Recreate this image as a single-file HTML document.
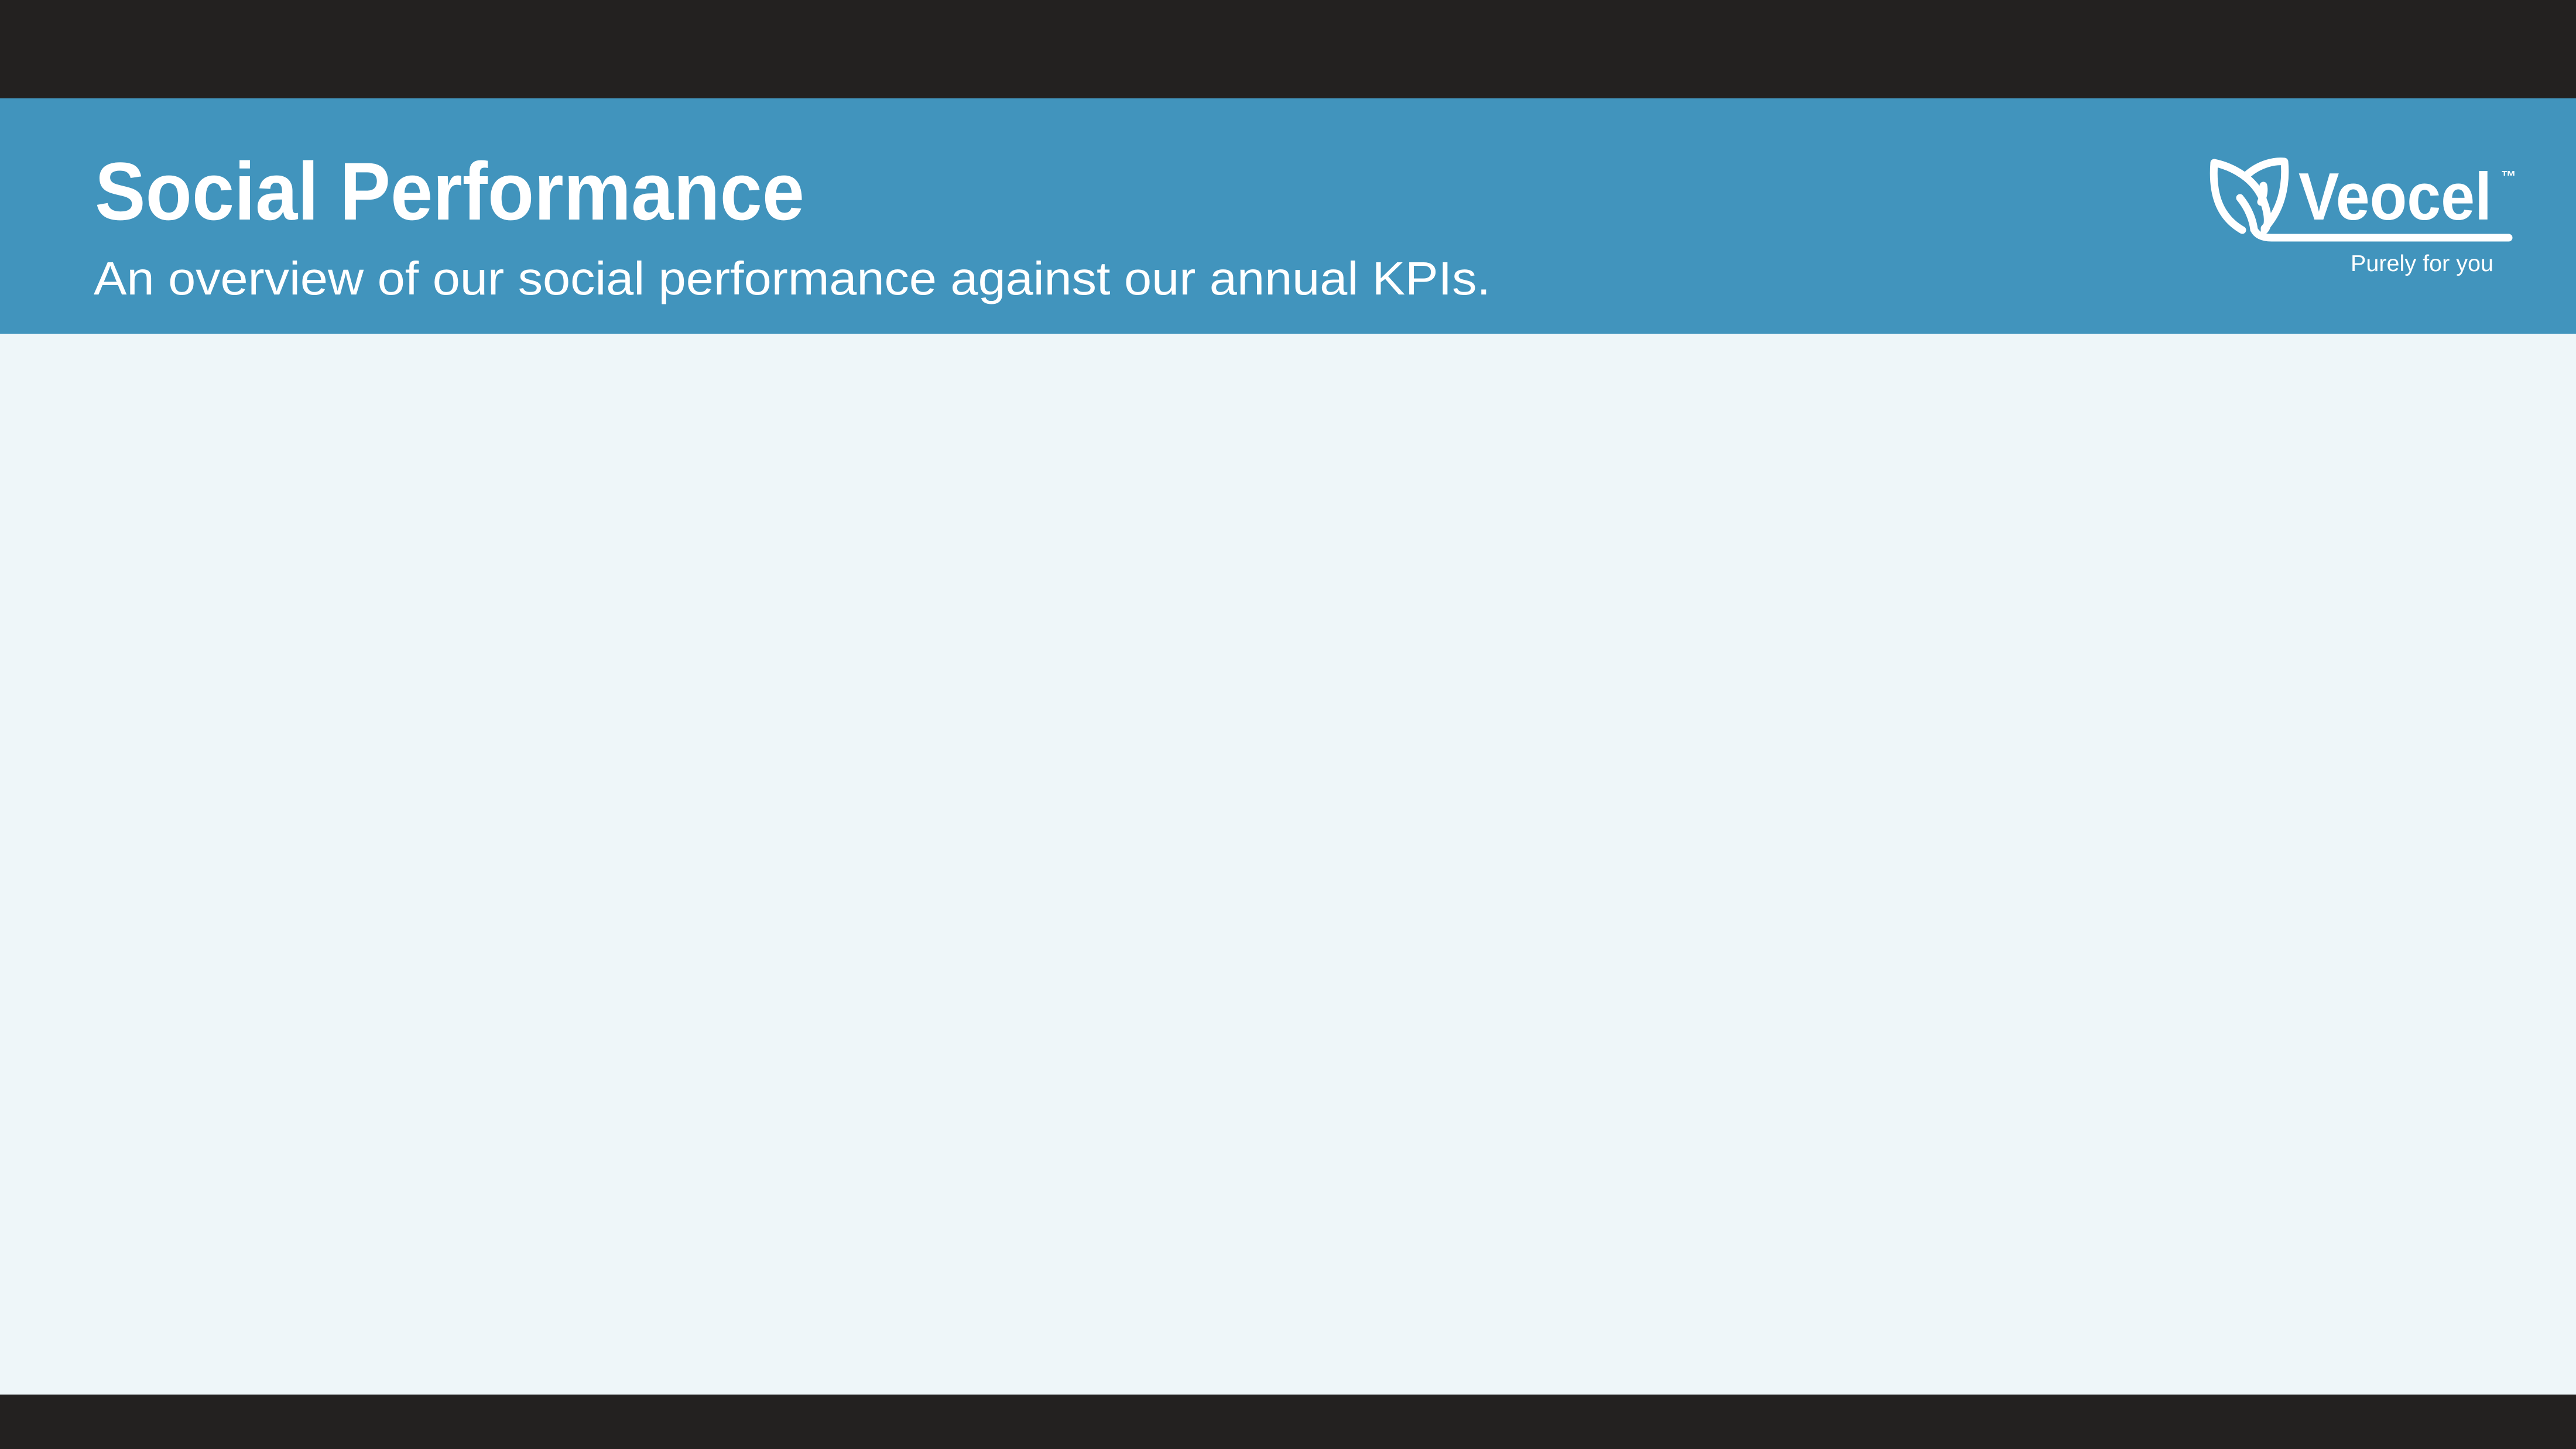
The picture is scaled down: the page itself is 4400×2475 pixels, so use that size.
<!DOCTYPE html>
<html><head><meta charset="utf-8"><style>
html,body{margin:0;padding:0;width:4400px;height:2475px;overflow:hidden;background:#eef6f9;}
svg{display:block}
</style></head><body>
<svg width="4400" height="2475" viewBox="0 0 4400 2475" xmlns="http://www.w3.org/2000/svg">
<rect x="0" y="0" width="4400" height="2475" fill="#eef6f9"/>
<rect x="0" y="0" width="4400" height="168" fill="#232120"/>
<rect x="0" y="168" width="4400" height="402" fill="#4194bd"/>
<rect x="0" y="2382" width="4400" height="93" fill="#232120"/>
<g font-family="'Liberation Sans', sans-serif" fill="#ffffff">
<text x="162" y="375" font-size="140" font-weight="bold" textLength="1212" lengthAdjust="spacingAndGlyphs">Social Performance</text>
<text x="160" y="503" font-size="80" textLength="2386" lengthAdjust="spacingAndGlyphs">An overview of our social performance against our annual KPIs.</text>
<text x="3926" y="375" font-size="114" font-weight="bold" textLength="330" lengthAdjust="spacingAndGlyphs">Veocel</text>
<text x="4272" y="310" font-size="26" font-weight="bold">™</text>
<text x="4015" y="463" font-size="39" textLength="244" lengthAdjust="spacingAndGlyphs">Purely for you</text>
</g>
<g fill="none" stroke="#ffffff" stroke-width="13" stroke-linecap="round" stroke-linejoin="round">
<path d="M3830 393 C3790 370 3778 330 3782 278 C3815 285 3850 305 3865 340 C3875 365 3876 385 3868 393"/>
<path d="M3840 297 C3860 280 3885 274 3902 276 C3906 320 3895 360 3868 390"/>
<path d="M3826 338 C3840 355 3848 375 3850 392"/>
<path d="M3862 345 C3866 335 3868 325 3866 317"/>
<path d="M3850 392 C3855 402 3865 406 3880 406 L4285 406"/>
</g>
</svg>
</body></html>
